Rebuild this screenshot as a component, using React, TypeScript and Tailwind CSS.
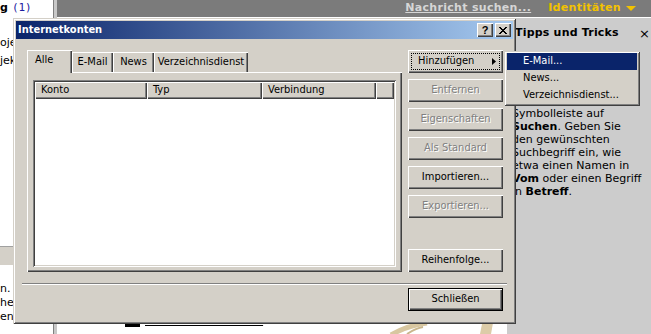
const raised = 'shadow-[inset_1px_1px_#ffffff,inset_-1px_-1px_#404040,inset_-2px_-2px_#808080]'
const dlgFont = "font-['DejaVu_Sans_Condensed','Liberation_Sans',sans-serif]"

type BtnProps = {
  label: string
  disabled?: boolean
}

function WinButton({ label, disabled }: BtnProps) {
  return (
    <div
      className={`flex h-[23px] w-[95px] shrink-0 items-center justify-center bg-[#d4d0c8] ${raised} ${
        disabled ? 'text-[#808080] [text-shadow:1px_1px_0_#ffffff]' : 'text-black'
      }`}
    >
      {label}
    </div>
  )
}

function CloseGlyph() {
  return (
    <svg width="8" height="7" viewBox="0 0 8 7" fill="#000">
      <path d="M0 0h2v1H0z M6 0h2v1H6z M1 1h2v1H1z M5 1h2v1H5z M2 2h4v1H2z M3 3h2v1H3z M2 4h4v1H2z M1 5h2v1H1z M5 5h2v1H5z M0 6h2v1H0z M6 6h2v1H6z" />
    </svg>
  )
}

export default function App() {
  return (
    <div className="relative flex h-[334px] w-[651px] overflow-hidden bg-white font-['DejaVu_Sans',sans-serif] text-[11px] text-black">
      {/* Ordnerliste (links, vom Dialog verdeckt) */}
      <div className="flex w-[53px] shrink-0 flex-col overflow-hidden whitespace-nowrap bg-white">
        <div className="flex h-[17px] items-center">
          <span className="font-bold">g</span>
          <span className="ml-[4px] font-['DejaVu_Sans_Mono',monospace] text-[#1c1ca0]">(1)</span>
        </div>
        <div className="mt-[17px] leading-[18px]">oje</div>
        <div className="leading-[18px]">jek</div>
        <div className="mt-[176px] h-[19px] border-t border-[#a0a0a0] bg-[#d4d0c8]" />
        <div className="mt-[17px] leading-[14px]">n.</div>
        <div className="leading-[14px]">hen</div>
        <div className="leading-[14px]">en.</div>
      </div>
      <div className="w-[4px] shrink-0 border-l border-[#808080] bg-[#c8c8c8]" />

      {/* Hauptbereich */}
      <div className="flex min-w-0 flex-1 flex-col">
        <div className="flex h-[17px] shrink-0 items-center justify-end gap-[17px] bg-[#7b7b7b] pr-[15px] font-bold tracking-[0.3px]">
          <span className="text-[#d6d6d6] underline">Nachricht suchen...</span>
          <span className="flex items-center gap-[5px] text-[#f2c200]">
            Identitäten
            <svg width="10" height="5" viewBox="0 0 10 5">
              <path d="M0 0h10l-5 5z" fill="#f2c200" />
            </svg>
          </span>
        </div>
        <div className="flex min-h-0 flex-1 border-t border-white">
          <div className="flex min-w-0 flex-1 flex-col bg-white">
            <div className="mt-auto flex h-[20px] items-start">
              <div className="ml-[68px] mt-[1px] h-[12px] w-[15px] bg-black" />
              <span className="ml-[5px] whitespace-nowrap leading-[13px] underline">Nachrichten erstellen</span>
              <svg className="ml-[124px]" width="115" height="20" viewBox="0 0 115 20">
                <path d="M4 21 C14 15 24 11 40 9" stroke="#d8c7a0" strokeWidth="5" fill="none" />
                <path d="M20 20 C26 16 30 14 36 13" stroke="#c9b68c" strokeWidth="2" fill="none" />
                <path d="M93 20 L95 10 L106 9 L104 20z" fill="#dccca8" />
              </svg>
            </div>
          </div>
          <div className="flex w-[144px] shrink-0 flex-col overflow-hidden whitespace-nowrap bg-[#cccccc]">
            <div className="mt-[8px] flex h-[15px] items-center pl-[8px] pr-[1px] font-bold tracking-[0.2px]">
              <span>Tipps und Tricks</span>
              <span className="ml-auto text-[13px] font-normal">×</span>
            </div>
            <div className="mt-[66px] pl-[5px] leading-[13px]">
              <div>Symbolleiste auf</div>
              <div>
                <b>Suchen</b>. Geben Sie
              </div>
              <div>den gewünschten</div>
              <div>Suchbegriff ein, wie</div>
              <div>etwa einen Namen in</div>
              <div>
                <b>Vom</b> oder einen Begriff
              </div>
              <div>
                in <b>Betreff</b>.
              </div>
            </div>
          </div>
        </div>
      </div>

      {/* Dialog Internetkonten */}
      <div
        className={`absolute left-[13px] top-[18px] flex h-[306px] w-[503px] flex-col bg-[#d4d0c8] p-[3px] shadow-[inset_1px_1px_#d4d0c8,inset_-1px_-1px_#404040,inset_2px_2px_#ffffff,inset_-2px_-2px_#808080] ${dlgFont} text-[11px]`}
      >
        <div className="flex h-[18px] shrink-0 items-center bg-[linear-gradient(to_right,#0a246a,#a6caf0)] px-[2px]">
          <span className="font-bold text-white">Internetkonten</span>
          <div className="ml-auto flex gap-[2px]">
            <div className={`flex h-[14px] w-[16px] items-center justify-center bg-[#d4d0c8] font-['Liberation_Sans',sans-serif] font-bold leading-none ${raised}`}>
              ?
            </div>
            <div className={`flex h-[14px] w-[16px] items-center justify-center bg-[#d4d0c8] ${raised}`}>
              <CloseGlyph />
            </div>
          </div>
        </div>

        <div className="ml-[11px] mt-[11px] flex h-[222px] gap-[6px]">
          {/* Register + Liste */}
          <div className="flex w-[375px] flex-col">
            <div className="relative z-10 flex h-[22px] items-end">
              <div className="-mb-[1px] flex h-[23px] w-[45px] items-start bg-[#d4d0c8] pl-[8px] pt-[3px] leading-[14px] shadow-[inset_1px_1px_#ffffff,inset_-1px_0_#404040,inset_-2px_0_#808080]">
                Alle
              </div>
              <div className="flex h-[20px] w-[41px] items-center justify-center shadow-[inset_1px_1px_#ffffff,inset_-1px_0_#404040,inset_-2px_0_#808080]">
                E-Mail
              </div>
              <div className="flex h-[20px] w-[41px] items-center justify-center shadow-[inset_1px_1px_#ffffff,inset_-1px_0_#404040,inset_-2px_0_#808080]">
                News
              </div>
              <div className="flex h-[20px] w-[94px] items-center justify-center shadow-[inset_1px_1px_#ffffff,inset_-1px_0_#404040,inset_-2px_0_#808080]">
                Verzeichnisdienst
              </div>
            </div>
            <div className={`h-[200px] w-[375px] bg-[#d4d0c8] pl-[6px] pt-[8px] ${raised}`}>
              <div className="h-[187px] w-[363px] bg-white p-[2px] shadow-[inset_1px_1px_#808080,inset_-1px_-1px_#ffffff,inset_2px_2px_#404040,inset_-2px_-2px_#d4d0c8]">
                <div className="flex h-[17px]">
                  <div className={`flex w-[112px] items-center bg-[#d4d0c8] pl-[6px] ${raised}`}>Konto</div>
                  <div className={`flex w-[115px] items-center bg-[#d4d0c8] pl-[6px] ${raised}`}>Typ</div>
                  <div className={`flex w-[114px] items-center bg-[#d4d0c8] pl-[6px] ${raised}`}>Verbindung</div>
                  <div className={`flex-1 bg-[#d4d0c8] ${raised}`} />
                </div>
              </div>
            </div>
          </div>

          {/* Schaltflächen */}
          <div className="flex flex-col gap-[6px]">
            <div className={`relative flex h-[23px] w-[95px] items-center justify-between bg-[#d4d0c8] pl-[10px] pr-[7px] ${raised}`}>
              <span>Hinzufügen</span>
              <svg width="4" height="7" viewBox="0 0 4 7">
                <path d="M0 0L4 3.5L0 7z" fill="#000" />
              </svg>
              <div className="absolute inset-[3px] border border-dotted border-black" />
            </div>
            <WinButton label="Entfernen" disabled />
            <WinButton label="Eigenschaften" disabled />
            <WinButton label="Als Standard" disabled />
            <WinButton label="Importieren..." />
            <WinButton label="Exportieren..." disabled />
            <div className="mt-auto">
              <WinButton label="Reihenfolge..." />
            </div>
          </div>
        </div>

        <div className="mx-[6px] mt-[11px] h-[2px] border-b border-t border-b-white border-t-[#808080]" />

        <div className="mr-[10px] mt-[3px] self-end">
          <div className="flex h-[23px] w-[95px] items-center justify-center bg-[#d4d0c8] shadow-[inset_0_0_0_1px_#000000,inset_2px_2px_#ffffff,inset_-2px_-2px_#404040,inset_-3px_-3px_#808080]">
            Schließen
          </div>
        </div>
      </div>

      {/* Menü zu Hinzufügen */}
      <div
        className={`absolute left-[504px] top-[51px] w-[136px] bg-[#d4d0c8] px-[3px] pb-[2px] pt-[2px] shadow-[inset_1px_1px_#d4d0c8,inset_-1px_-1px_#404040,inset_2px_2px_#ffffff,inset_-2px_-2px_#808080] ${dlgFont} text-[11px]`}
      >
        <div className="flex h-[17px] items-center bg-[#0a246a] pl-[16px] text-white">E-Mail...</div>
        <div className="flex h-[17px] items-center pl-[16px]">News...</div>
        <div className="flex h-[17px] items-center pl-[16px]">Verzeichnisdienst...</div>
      </div>
    </div>
  )
}
